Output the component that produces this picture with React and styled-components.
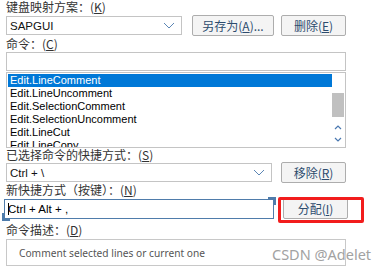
import React from "react";
import styled, { createGlobalStyle } from "styled-components";

const Global = createGlobalStyle`
  body {
    margin: 0;
    background: #fff;
    font-family: "Noto Sans", "Noto Sans CJK SC", sans-serif;
  }
`;

const Page = styled.div`
  position: relative;
  width: 383px;
  height: 266px;
  overflow: hidden;
  padding-left: 6px;
  box-sizing: border-box;
`;

const Label = styled.div`
  height: ${(p) => p.h || 14}px;
  font-family: "Noto Sans CJK SC", sans-serif;
  font-size: 12px;
  line-height: 14px;
  color: #333;
  white-space: nowrap;
  margin-top: ${(p) => p.mt || 0}px;
`;

const Row = styled.div`
  display: flex;
  align-items: center;
  height: ${(p) => p.h}px;
`;

const Combo = styled.div`
  width: ${(p) => p.w}px;
  height: 19px;
  box-sizing: border-box;
  border: 1px solid #c4c4c4;
  display: flex;
  align-items: center;
  justify-content: space-between;
  padding: 0 6px 0 3px;
  font-family: "Liberation Sans", sans-serif;
  font-size: 11.5px;
  color: #111;
`;

const Chevron = () => (
  <svg width="12" height="7" viewBox="0 0 12 7">
    <path d="M1 1l5 5 5-5" fill="none" stroke="#5b86b5" strokeWidth="1" />
  </svg>
);

const Button = styled.div`
  width: ${(p) => p.w}px;
  height: 21px;
  margin-left: ${(p) => p.ml}px;
  box-sizing: border-box;
  border: 1px solid #adadad;
  border-radius: 2px;
  background: #f4f4f4;
  display: flex;
  align-items: center;
  justify-content: center;
  font-family: "Noto Sans CJK SC", sans-serif;
  font-size: 12px;
  color: #2d4c6e;
  white-space: nowrap;
`;

const Input = styled.div`
  width: 340px;
  height: 19px;
  box-sizing: border-box;
  border: 1px solid #c4c4c4;
`;

const List = styled.div`
  position: relative;
  width: 340px;
  height: 76px;
  margin-top: 1px;
  box-sizing: border-box;
  border: 1px solid #c4c4c4;
  padding: 1px 13px 0 1px;
  overflow: hidden;
`;

const Item = styled.div`
  height: 13px;
  line-height: 13px;
  padding-left: 2px;
  font-family: "Liberation Sans", sans-serif;
  font-size: 11px;
  background: ${(p) => (p.sel ? "#0078d7" : "transparent")};
  color: ${(p) => (p.sel ? "#fff" : "#000")};
  white-space: nowrap;
`;

const ScrollBar = styled.div`
  position: absolute;
  right: 1px;
  top: 0;
  bottom: 0;
  width: 12px;
`;

const Thumb = styled.div`
  position: absolute;
  top: 20px;
  left: 0;
  width: 12px;
  height: 24px;
  background: #c0c0c0;
`;

const Arrow = styled.svg`
  position: absolute;
  left: 2px;
  top: ${(p) => p.t}px;
`;

const KeyInput = styled.div`
  position: relative;
  width: 270px;
  height: 20px;
  margin-left: -2px;
  box-sizing: border-box;
  border: 1px solid #4f7cab;
  display: flex;
  align-items: center;
  padding-left: 3px;
  font-family: "Liberation Sans", sans-serif;
  font-size: 11.5px;
  color: #000;

  &::before {
    content: "";
    position: absolute;
    right: -3px;
    top: -3px;
    width: 6px;
    height: 6px;
    border-top: 2px solid #4f7cab;
    border-right: 2px solid #4f7cab;
  }
  &::after {
    content: "";
    position: absolute;
    left: -3px;
    bottom: -3px;
    width: 6px;
    height: 6px;
    border-bottom: 2px solid #4f7cab;
    border-left: 2px solid #4f7cab;
  }
`;

const Caret = styled.span`
  display: inline-block;
  width: 1px;
  height: 12px;
  background: #000;
  margin-right: -1px;
`;

const Marked = styled.div`
  position: relative;
  margin-left: 9px;

  &::after {
    content: "";
    position: absolute;
    left: -5px;
    top: -1px;
    width: 86px;
    height: 26px;
    border: 3px solid #f21d1d;
    border-radius: 2px;
    box-sizing: border-box;
  }
`;

const Desc = styled.div`
  width: 340px;
  height: 27px;
  margin-top: 2px;
  box-sizing: border-box;
  border: 1px solid #c8c8c8;
  padding-left: 12px;
  display: flex;
  align-items: center;
  font-family: "Noto Sans", sans-serif;
  font-size: 10.2px;
  color: #555;
  white-space: nowrap;
  overflow: hidden;
`;

const Watermark = styled.div`
  position: absolute;
  left: 272px;
  top: 244px;
  font-family: "Noto Sans", sans-serif;
  font-size: 14.5px;
  color: #a2a2a2;
  text-shadow: 0 0 2px #fff;
  white-space: nowrap;
`;

const items = [
  "Edit.LineComment",
  "Edit.LineUncomment",
  "Edit.SelectionComment",
  "Edit.SelectionUncomment",
  "Edit.LineCut",
  "Edit.LineCopy",
];

export default function App() {
  return (
    <Page>
      <Global />
      <Label>
        键盘映射方案：(<u>K</u>)
      </Label>
      <Row h={23}>
        <Combo w={176}>
          SAPGUI
          <Chevron />
        </Combo>
        <Button w={82} ml={10}>
          另存为(<u>A</u>)...
        </Button>
        <Button w={65} ml={7}>
          删除(<u>E</u>)
        </Button>
      </Row>
      <Label h={15}>
        命令：(<u>C</u>)
      </Label>
      <Input />
      <List>
        {items.map((t, i) => (
          <Item key={t} sel={i === 0}>
            {t}
          </Item>
        ))}
        <ScrollBar>
          <Thumb />
          <Arrow t={52} width="8" height="5" viewBox="0 0 8 5">
            <path d="M1 4l3-3 3 3" fill="none" stroke="#4a78b0" strokeWidth="1.2" />
          </Arrow>
          <Arrow t={64} width="8" height="5" viewBox="0 0 8 5">
            <path d="M1 1l3 3 3-3" fill="none" stroke="#4a78b0" strokeWidth="1.2" />
          </Arrow>
        </ScrollBar>
      </List>
      <Label>
        已选择命令的快捷方式：(<u>S</u>)
      </Label>
      <Row h={21}>
        <Combo w={266}>
          Ctrl + \
          <Chevron />
        </Combo>
        <Button w={65} ml={9}>
          移除(<u>R</u>)
        </Button>
      </Row>
      <Label h={15}>
        新快捷方式（按键）：(<u>N</u>)
      </Label>
      <Row h={21}>
        <KeyInput>
          <Caret />
          Ctrl + Alt + ,
        </KeyInput>
        <Marked>
          <Button w={65} ml={0}>
            分配(<u>I</u>)
          </Button>
        </Marked>
      </Row>
      <Label mt={4}>
        命令描述：(<u>D</u>)
      </Label>
      <Desc>Comment selected lines or current one</Desc>
      <Watermark>CSDN @Adelet</Watermark>
    </Page>
  );
}
